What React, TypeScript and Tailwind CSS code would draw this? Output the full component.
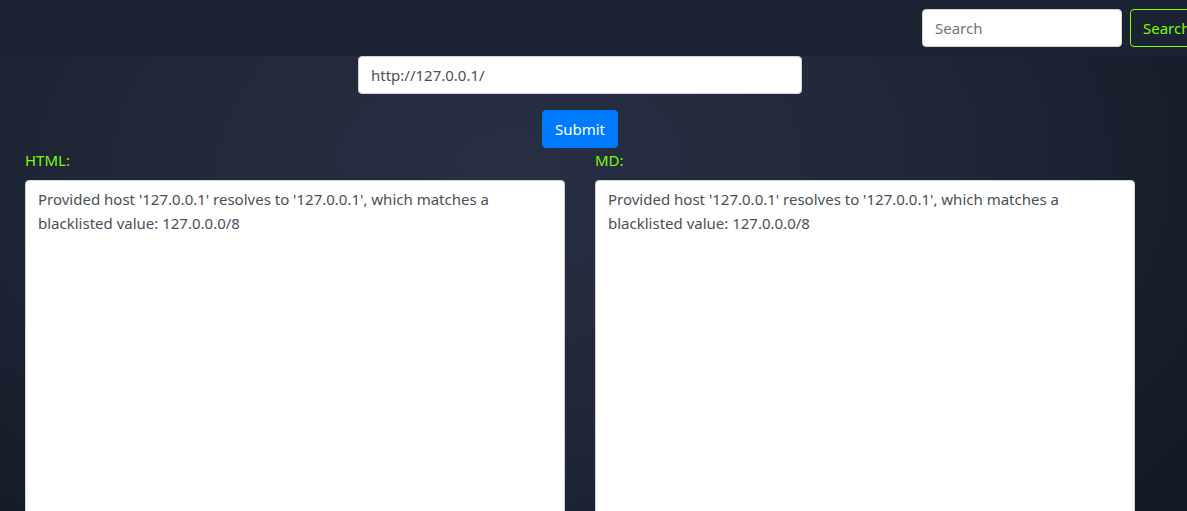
import React from "react";

const msg =
  "Provided host '127.0.0.1' resolves to '127.0.0.1', which matches a blacklisted value: 127.0.0.0/8";

export default function App() {
  return (
    <div
      className="min-h-screen w-full overflow-hidden bg-[radial-gradient(ellipse_70%_90%_at_43%_28%,#292f43_0%,#222839_45%,#111a26_100%)] text-[15px] leading-6"
      style={{ fontFamily: "'Noto Sans', 'Open Sans', Arial, sans-serif" }}
    >
      <nav className="flex h-[56px] items-center justify-end bg-[#1b2232]">
        <input
          className="h-[38px] w-[200px] rounded-[4px] border border-[#ced4da] bg-white px-[12px] text-[#495057] placeholder:text-[#6c757d] outline-none"
          placeholder="Search"
        />
        <button className="ml-[8px] mr-[-23px] h-[38px] w-[80px] shrink-0 rounded-[4px] border border-[#7cfc00] px-[12px] text-left text-[#7cfc00]">
          Search
        </button>
      </nav>
      <div className="flex w-[1160px] flex-col items-center px-[10px]">
        <input
          className="h-[38px] w-[444px] rounded-[4px] border border-[#ced4da] bg-white px-[12px] text-[#495057] outline-none"
          defaultValue="http://127.0.0.1/"
        />
        <button className="mt-[16px] h-[38px] w-[76px] rounded-[4px] border border-[#007bff] bg-[#007bff] text-white">
          Submit
        </button>
        <div className="flex w-full">
          <div className="flex w-[570px] flex-col px-[15px]">
            <label className="mb-[8px] text-[#7cfc00]">HTML:</label>
            <textarea
              readOnly
              className="h-[400px] w-[540px] resize-none rounded-[4px] border border-[#ced4da] bg-white px-[12px] py-[6px] text-[#495057] outline-none"
              value={msg}
            />
          </div>
          <div className="flex w-[570px] flex-col px-[15px]">
            <label className="mb-[8px] text-[#7cfc00]">MD:</label>
            <textarea
              readOnly
              className="h-[400px] w-[540px] resize-none rounded-[4px] border border-[#ced4da] bg-white px-[12px] py-[6px] text-[#495057] outline-none"
              value={msg}
            />
          </div>
        </div>
      </div>
    </div>
  );
}
